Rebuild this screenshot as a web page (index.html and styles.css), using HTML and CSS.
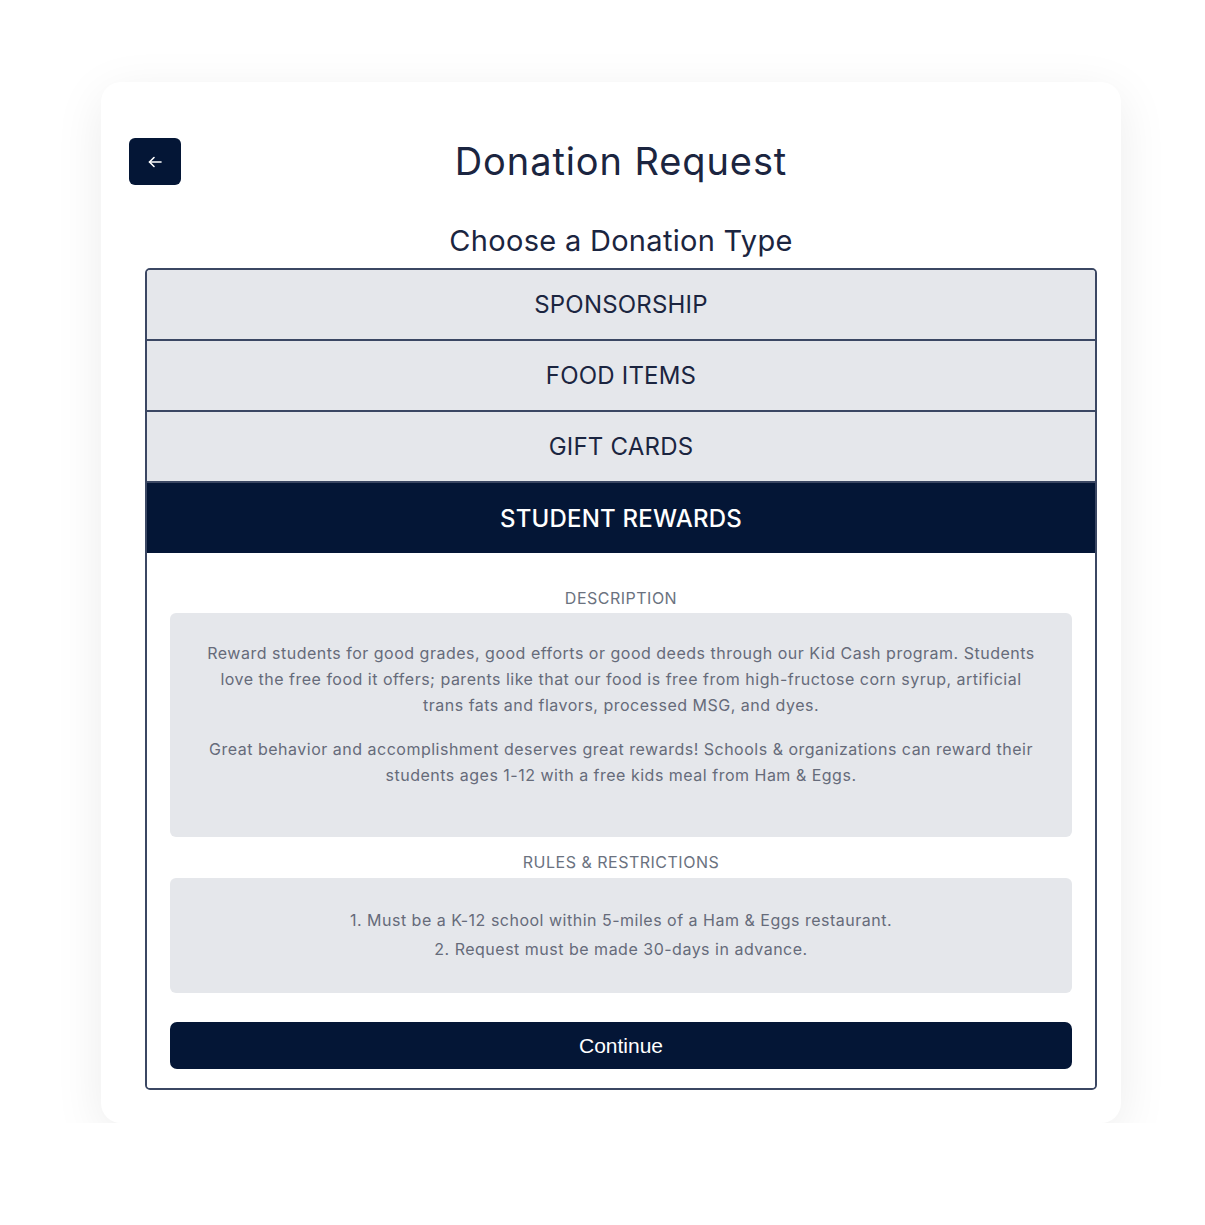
FILE: index.html
```html
<!DOCTYPE html>
<html lang="en">
<head>
    <meta charset="UTF-8">
    <meta name="viewport" content="width=device-width, initial-scale=1.0">
    <title>Donation Request</title>
    <link rel="stylesheet" href="styles.css">
</head>
<body>
    <div class="card">
        <header class="card-header">
            <button class="back-btn" aria-label="Back">
                <svg width="20" height="20" viewBox="0 0 20 20" fill="none" stroke="#ffffff" stroke-width="1.6" stroke-linecap="round" stroke-linejoin="round">
                    <path d="M16 10H4.5"/>
                    <path d="M9 5.5L4.5 10L9 14.5"/>
                </svg>
            </button>
            <h1>Donation Request</h1>
            <span class="spacer"></span>
        </header>

        <h2 class="subtitle">Choose a Donation Type</h2>

        <div class="types">
            <div class="type">SPONSORSHIP</div>
            <div class="type">FOOD ITEMS</div>
            <div class="type">GIFT CARDS</div>
            <div class="type active">STUDENT REWARDS</div>

            <div class="details">
                <div class="label label-first">DESCRIPTION</div>
                <div class="info desc">
                    <p>Reward students for good grades, good efforts or good deeds through our Kid Cash program. Students love the free food it offers; parents like that our food is free from high-fructose corn syrup, artificial trans fats and flavors, processed MSG, and dyes.</p>
                    <p>Great behavior and accomplishment deserves great rewards! Schools &amp; organizations can reward their students ages 1-12 with a free kids meal from Ham &amp; Eggs.</p>
                </div>

                <div class="label">RULES &amp; RESTRICTIONS</div>
                <div class="info rules">
                    <p>1. Must be a K-12 school within 5-miles of a Ham &amp; Eggs restaurant.</p>
                    <p>2. Request must be made 30-days in advance.</p>
                </div>

                <button class="continue">Continue</button>
            </div>
        </div>
    </div>
</body>
</html>
```

FILE: styles.css
```css
body {
    margin: 0;
    padding: 0;
    background-color: #ffffff;
    font-family: 'Inter', 'Noto Sans', sans-serif;
    color: #1b2540;
}
.card {
    width: 1020px;
    margin: 82px 0 0 101px;
    box-sizing: border-box;
    padding: 56px 24px 33px 44px;
    background-color: #ffffff;
    border-radius: 20px;
    box-shadow: 0 12px 50px rgba(0, 0, 0, 0.08);
}
.card-header {
    display: flex;
    align-items: center;
}
.back-btn {
    width: 52px;
    height: 47px;
    margin-left: -16px;
    flex: none;
    display: flex;
    align-items: center;
    justify-content: center;
    padding: 0;
    border: none;
    border-radius: 6px;
    background-color: #041636;
    cursor: pointer;
}
.card-header h1 {
    flex: 1;
    margin: 0;
    text-align: center;
    font-size: 38px;
    font-weight: 400;
    line-height: 47px;
    letter-spacing: 0.9px;
    color: #1b2540;
}
.spacer {
    width: 36px;
    flex: none;
}
.subtitle {
    margin: 39px 0 10px;
    text-align: center;
    font-size: 29px;
    font-weight: 400;
    line-height: 34px;
    letter-spacing: 0.3px;
    color: #1b2540;
}
.types {
    border: 2px solid #3b4763;
    border-radius: 5px;
    overflow: hidden;
}
.type {
    height: 69px;
    display: flex;
    align-items: center;
    justify-content: center;
    background-color: #e5e7eb;
    border-bottom: 2px solid #3b4763;
    font-size: 24px;
    color: #1b2540;
    letter-spacing: 0.2px;
}
.type.active {
    height: 70px;
    background-color: #041636;
    border-bottom: none;
    color: #ffffff;
    font-weight: 500;
}
.details {
    padding: 0 23px 19px;
    background-color: #ffffff;
}
.label {
    margin: 15px 0 6px;
    text-align: center;
    font-size: 16px;
    line-height: 20px;
    letter-spacing: 0.5px;
    color: #6b7280;
}
.label-first {
    margin-top: 35px;
    margin-bottom: 5px;
}
.info {
    background-color: #e5e7eb;
    border-radius: 6px;
    text-align: center;
    font-size: 16px;
    letter-spacing: 0.5px;
    color: #666b7a;
}
.info p {
    margin: 0;
}
.desc {
    padding: 27px 30px 49px;
    line-height: 26px;
}
.desc p + p {
    margin-top: 18px;
}
.rules {
    padding: 28px 30px 29px;
    line-height: 29px;
}
.continue {
    display: block;
    width: 100%;
    height: 47px;
    margin-top: 29px;
    border: none;
    border-radius: 7px;
    background-color: #041636;
    color: #ffffff;
    font-family: 'Liberation Sans', Arial, sans-serif;
    font-size: 21px;
    cursor: pointer;
}
```
